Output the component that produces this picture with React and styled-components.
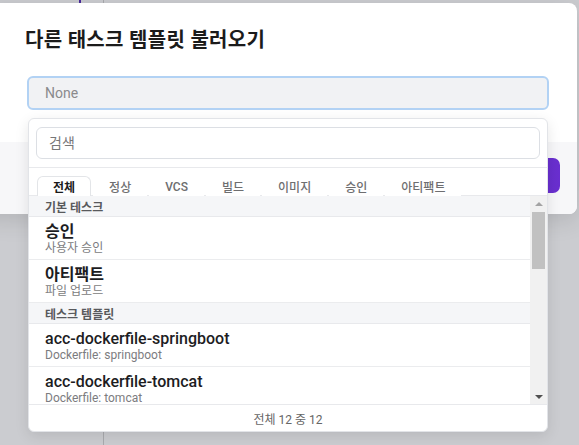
import React from "react";
import styled, { createGlobalStyle } from "styled-components";

const Global = createGlobalStyle`
  html, body { margin: 0; padding: 0; }
  body {
    width: 579px; height: 445px; overflow: hidden;
    font-family: Roboto, "Noto Sans CJK KR", sans-serif;
    background: #cbccd0;
  }
  * { box-sizing: border-box; }
`;

const Backdrop = styled.div`
  position: relative;
  width: 579px;
  height: 445px;
  background: #cbccd0;
  overflow: hidden;
`;

const PageLine = styled.div`
  position: absolute;
  left: ${(p) => p.$x}px;
  top: 0;
  height: ${(p) => p.$h};
  width: ${(p) => p.$w}px;
  background: ${(p) => p.$c};
`;

const Modal = styled.div`
  position: absolute;
  top: 3px;
  left: -20px;
  width: 597px;
  background: #fff;
  border-radius: 8px;
  box-shadow: 0 6px 24px rgba(0, 0, 0, 0.12);
  display: flex;
  flex-direction: column;
`;

const Header = styled.div`
  padding: 23px 28px 0 45px;
`;

const Title = styled.h2`
  margin: 0;
  font-size: 20px;
  line-height: 28px;
  font-weight: 700;
  color: #1b1b1b;
  letter-spacing: 0.3px;
`;

const Body = styled.div`
  padding: 22px 28px 32px 47px;
`;

const SelectWrap = styled.div`
  position: relative;
`;

const SelectBox = styled.div`
  height: 34px;
  border: 2px solid #b2d2f4;
  border-radius: 6px;
  background: #f1f2f4;
  display: flex;
  align-items: center;
  padding-left: 16px;
  font-size: 14px;
  color: #8a8a8c;
`;

const Footer = styled.div`
  background: #f7f7f9;
  border-radius: 0 0 8px 8px;
  padding: 16px 17px 21px;
  display: flex;
  justify-content: flex-end;
`;

const PrimaryButton = styled.button`
  height: 35px;
  padding: 0 18px;
  border: none;
  border-radius: 7px;
  background: linear-gradient(90deg, #5a2bbd, #6a2fd0);
  color: #fff;
  font-family: inherit;
  font-size: 14px;
  font-weight: 600;
`;

const Dropdown = styled.div`
  position: absolute;
  top: calc(100% + 8px);
  left: 1px;
  right: 1px;
  background: #fff;
  border: 1px solid #e2e4e8;
  border-radius: 6px;
  box-shadow: 0 4px 14px rgba(0, 0, 0, 0.1);
  display: flex;
  flex-direction: column;
  overflow: hidden;
  z-index: 5;
`;

const SearchArea = styled.div`
  padding: 8px 7px 8px;
  border-bottom: 1px solid #e8e9ec;
`;

const SearchInput = styled.input`
  display: block;
  width: 100%;
  height: 32px;
  border: 1px solid #dcdfe4;
  border-radius: 6px;
  padding: 0 12px;
  font-family: inherit;
  font-size: 14px;
  color: #222;
  outline: none;
  &::placeholder { color: #777; }
`;

const TabRow = styled.div`
  display: flex;
  gap: 2px;
  padding: 8px 8px 0;
  border-bottom: 1px solid #e8e9ec;
`;

const Tab = styled.div`
  height: 20px;
  padding: 0 15px;
  display: flex;
  align-items: center;
  font-size: 12px;
  font-weight: ${(p) => (p.$active ? 700 : 500)};
  color: ${(p) => (p.$active ? "#1b1b1b" : "#6e6e70")};
  background: #fff;
  border: 1px solid ${(p) => (p.$active ? "#e3e5e8" : "transparent")};
  border-bottom: none;
  border-radius: 6px 6px 0 0;
  margin-bottom: -1px;
`;

const ListArea = styled.div`
  height: 208px;
  display: flex;
`;

const ListContent = styled.div`
  flex: 1;
  overflow: hidden;
`;

const ScrollBar = styled.div`
  width: 17px;
  background: #f1f1f1;
  display: flex;
  flex-direction: column;
`;

const ArrowButton = styled.div`
  height: 15px;
  display: flex;
  align-items: center;
  justify-content: center;
  &::before {
    content: "";
    width: 0;
    height: 0;
    border-left: 4px solid transparent;
    border-right: 4px solid transparent;
    ${(p) =>
      p.$dir === "up"
        ? "border-bottom: 4px solid #a3a3a3;"
        : "border-top: 4px solid #505050;"}
  }
`;

const Track = styled.div`
  flex: 1;
  padding: 1px 2px;
`;

const Thumb = styled.div`
  height: 57px;
  background: #c1c1c1;
`;

const GroupHeader = styled.div`
  height: 21px;
  display: flex;
  align-items: center;
  padding-left: 16px;
  background: #f5f6f8;
  border-bottom: 1px solid #e8e9ec;
  font-size: 12px;
  font-weight: 600;
  color: #58595c;
`;

const Item = styled.div`
  padding: 5px 16px 4px;
  border-bottom: 1px solid #ebecee;
`;

const ItemTitle = styled.div`
  font-size: 16px;
  line-height: 19px;
  font-weight: 500;
  color: #1d1d1f;
  white-space: nowrap;
  &:lang(ko) { font-weight: 700; }
`;

const ItemSub = styled.div`
  font-size: 12px;
  line-height: 14px;
  color: #7c7c80;
  white-space: nowrap;
`;

const ListFooter = styled.div`
  height: 27px;
  border-top: 1px solid #e8e9ec;
  display: flex;
  align-items: center;
  justify-content: center;
  font-size: 12px;
  color: #666;
`;

const tabs = ["전체", "정상", "VCS", "빌드", "이미지", "승인", "아티팩트"];

const groups = [
  {
    name: "기본 테스크",
    items: [
      { t: "승인", s: "사용자 승인", ko: true },
      { t: "아티팩트", s: "파일 업로드", ko: true },
    ],
  },
  {
    name: "테스크 템플릿",
    items: [
      { t: "acc-dockerfile-springboot", s: "Dockerfile: springboot" },
      { t: "acc-dockerfile-tomcat", s: "Dockerfile: tomcat" },
      { t: "acc-dockerfile-nodejs", s: "Dockerfile: nodejs" },
      { t: "acc-dockerfile-nginx", s: "Dockerfile: nginx" },
      { t: "acc-gradle-build", s: "Gradle: build" },
      { t: "acc-maven-build", s: "Maven: build" },
      { t: "acc-npm-build", s: "Npm: build" },
      { t: "acc-git-clone", s: "Git: clone" },
      { t: "acc-image-push", s: "Image: push" },
      { t: "acc-helm-deploy", s: "Helm: deploy" },
    ],
  },
];

export default function App() {
  return (
    <>
      <Global />
      <Backdrop>
        <PageLine $x={79} $w={2} $h="10px" $c="#4a2a9c" />
        <PageLine $x={103} $w={1} $h="100%" $c="#a9aaae" />
        <Modal>
          <Header>
            <Title>다른 태스크 템플릿 불러오기</Title>
          </Header>
          <Body>
            <SelectWrap>
              <SelectBox>None</SelectBox>
              <Dropdown>
                <SearchArea>
                  <SearchInput placeholder="검색" />
                </SearchArea>
                <TabRow>
                  {tabs.map((t, i) => (
                    <Tab key={t} $active={i === 0}>
                      {t}
                    </Tab>
                  ))}
                </TabRow>
                <ListArea>
                  <ListContent>
                    {groups.map((g) => (
                      <React.Fragment key={g.name}>
                        <GroupHeader>{g.name}</GroupHeader>
                        {g.items.map((it) => (
                          <Item key={it.t}>
                            <ItemTitle lang={it.ko ? "ko" : "en"}>{it.t}</ItemTitle>
                            <ItemSub>{it.s}</ItemSub>
                          </Item>
                        ))}
                      </React.Fragment>
                    ))}
                  </ListContent>
                  <ScrollBar>
                    <ArrowButton $dir="up" />
                    <Track>
                      <Thumb />
                    </Track>
                    <ArrowButton $dir="down" />
                  </ScrollBar>
                </ListArea>
                <ListFooter>전체 12 중 12</ListFooter>
              </Dropdown>
            </SelectWrap>
          </Body>
          <Footer>
            <PrimaryButton>불러오기</PrimaryButton>
          </Footer>
        </Modal>
      </Backdrop>
    </>
  );
}
